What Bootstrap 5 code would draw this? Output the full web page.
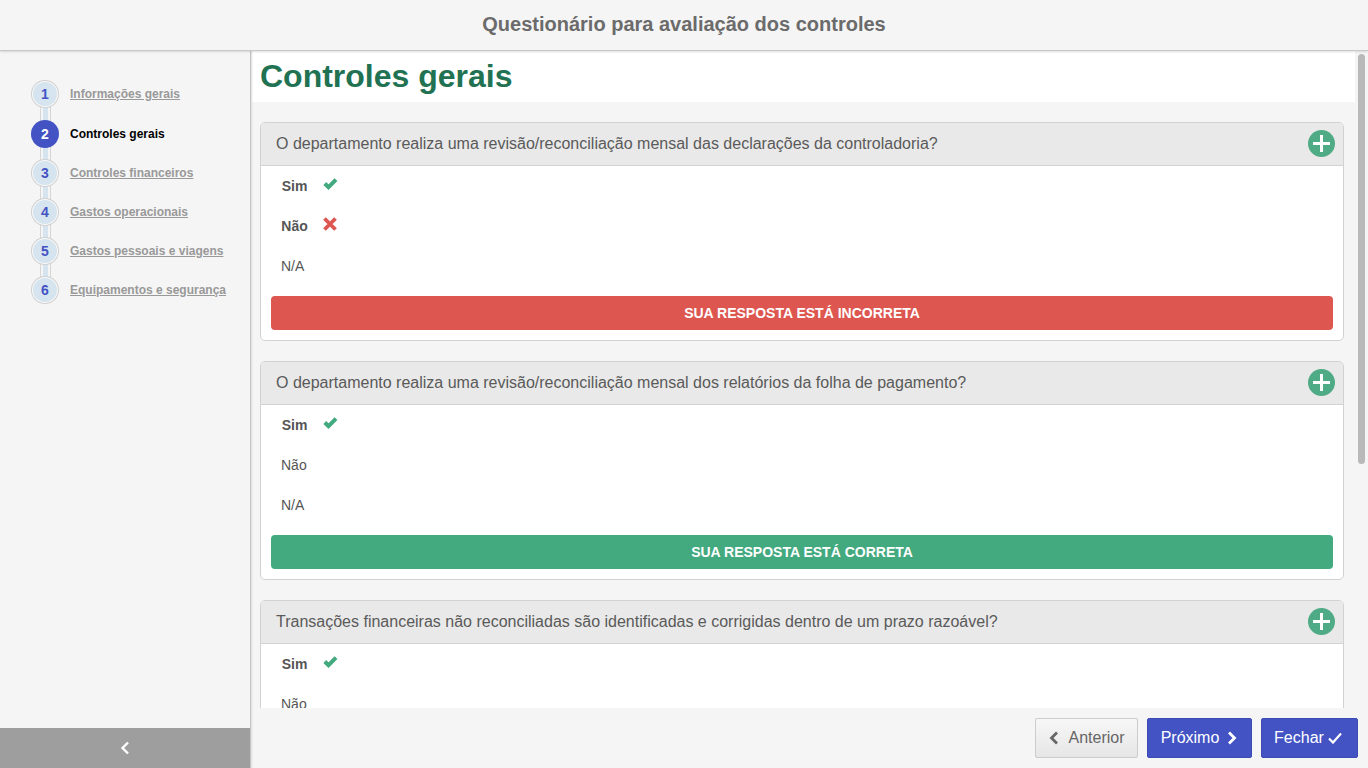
<!DOCTYPE html>
<html lang="pt"><head><meta charset="utf-8"><title>Questionário</title>
<link href="https://cdn.jsdelivr.net/npm/bootstrap@5.3.0/dist/css/bootstrap.min.css" rel="stylesheet">
<style>
html,body{height:100%;overflow:hidden}
body{font-family:"Liberation Sans",Arial,sans-serif;background:#f5f5f5;color:#555;width:1368px;height:768px}
.qa-top{height:51px;padding-bottom:2px;background:#f5f5f5;border-bottom:1px solid #c8c8c8;box-shadow:0 1px 2px rgba(0,0,0,.12);font-size:20px;font-weight:700;color:#6b6b6b;position:relative;z-index:2}
.qa-shell{height:717px}
.qa-side{width:251px;flex:none;border-right:1px solid #c4c4c4;box-shadow:1px 0 2px rgba(0,0,0,.1);background:#f5f5f5;position:relative;z-index:1}
.qa-steps{padding:30px 0 0 31px;list-style:none;margin:0;position:relative}
.qa-step{height:39px;font-size:12px;font-weight:700;color:#999;position:relative}
.qa-step:first-child{height:40px}
.qa-step a{color:#999;margin-left:13px}
.qa-step.on a{color:#000;text-decoration:none}
.qa-dot{width:24px;height:24px;margin:1px 0 0 2px;border-radius:50%;background:#d5e4ee;box-shadow:0 0 0 1px #f9f9f9,0 0 0 2px #d0d0d0;color:#4353c4;font-size:14px;position:relative;z-index:1;flex:none}
.qa-step:not(:last-child)::before{content:"";position:absolute;left:9px;top:20px;width:11px;height:30px;padding:0 2px;background:#d5e4ee content-box;border:solid #d6d6d6;border-width:0 1px}
.qa-step.on .qa-dot{width:28px;height:28px;margin:-1px 0 0 0;background:#4353c4;color:#fff;box-shadow:none}
.qa-step.on a{margin-left:11px}
.qa-toggle{height:40px;background:#9e9e9e}
.qa-main{width:1117px;min-width:0}
.qa-body{height:657px}
.qa-scroll{flex:1;overflow:hidden;min-width:0}
.qa-title{height:51px;background:#fff;margin-left:1px;padding:7px 0 0 8px;font-size:32px;line-height:37px;font-weight:700;color:#217253;margin-bottom:20px}
.qa-card{margin:0 11px 20px 9px;width:1084px;border:1px solid #d2d2d2;border-radius:5px;background:#fff;overflow:hidden}
.qa-head{height:43px;background:#e9e9e9;border-bottom:1px solid #d2d2d2;padding:0 8px 0 15px;font-size:16px;color:#5a5a5a}
.qa-plus{width:27px;height:27px;margin-top:-1px}
.qa-opt{height:40px;padding-left:20px;font-size:14px;color:#555}
.qa-opt b{width:27px;text-align:center;margin-right:15px;display:block;flex:none}
.qa-opt span{width:27px;margin-right:15px;display:block;flex:none}
.qa-res{height:34px;margin:10px;border-radius:4px;font-size:14px;font-weight:700;color:#fff;background:#43a97f;padding-top:1px}
.qa-res.bad{background:#dd5650}
.qa-track{width:13px;background:#f5f5f5;padding:3px 3px 0 3px;flex:none}
.qa-thumb{width:7px;height:410px;background:#b9b9b9;border-radius:4px}
.qa-foot{height:60px;background:#f5f5f5;padding-right:10px;gap:9px}
.qa-btn{height:40px;font-size:16px;border-radius:2px;padding:0;color:#fff;background:#4353c4;border:1px solid #3d4cb5}
.qa-btn:hover{background:#4353c4;color:#fff}
.qa-prev{width:103px;background:linear-gradient(#f7f7f7,#e6e6e6);border-color:#ccc;color:#666;padding-left:1px;gap:5px}
.qa-prev:hover{color:#666}
.qa-next{width:105px;padding-right:1px;gap:4px}
.qa-close{width:97px;gap:4px;padding-right:3px}
</style></head><body>
<header class="qa-top d-flex align-items-center justify-content-center">Questionário para avaliação dos controles</header>
<div class="qa-shell d-flex">
 <aside class="qa-side d-flex flex-column">
  <ul class="qa-steps flex-grow-1">
   <li class="qa-step d-flex"><div class="qa-dot d-flex align-items-center justify-content-center">1</div><a href="#" class="pt-1">Informações gerais</a></li>
   <li class="qa-step on d-flex"><div class="qa-dot d-flex align-items-center justify-content-center">2</div><a href="#" class="pt-1">Controles gerais</a></li>
   <li class="qa-step d-flex"><div class="qa-dot d-flex align-items-center justify-content-center">3</div><a href="#" class="pt-1">Controles financeiros</a></li>
   <li class="qa-step d-flex"><div class="qa-dot d-flex align-items-center justify-content-center">4</div><a href="#" class="pt-1">Gastos operacionais</a></li>
   <li class="qa-step d-flex"><div class="qa-dot d-flex align-items-center justify-content-center">5</div><a href="#" class="pt-1">Gastos pessoais e viagens</a></li>
   <li class="qa-step d-flex"><div class="qa-dot d-flex align-items-center justify-content-center">6</div><a href="#" class="pt-1">Equipamentos e segurança</a></li>
  </ul>
  <div class="qa-toggle d-flex align-items-center justify-content-center"><svg width="10" height="14" viewBox="0 0 10 14"><path d="M8 1.5 2.5 7 8 12.5" fill="none" stroke="#fff" stroke-width="2.4"/></svg></div>
 </aside>
 <main class="qa-main d-flex flex-column">
  <div class="qa-body d-flex overflow-hidden">
   <div class="qa-scroll">
    <h1 class="qa-title">Controles gerais</h1>
    <section class="qa-card">
     <div class="qa-head d-flex align-items-center justify-content-between">O departamento realiza uma revisão/reconciliação mensal das declarações da controladoria?<svg class="qa-plus" viewBox="0 0 27 27"><circle cx="13.5" cy="13.5" r="13.5" fill="#4fab85"/><path d="M13.5 5v17M5 13.5h17" stroke="#fff" stroke-width="3"/></svg></div>
     <div class="qa-opt d-flex align-items-center"><b>Sim</b><svg width="15" height="12" viewBox="0 0 15 12" class="mb-1"><path d="M1.8 5.5 5.5 9.2 13 1.7" fill="none" stroke="#43a97f" stroke-width="4"/></svg></div>
     <div class="qa-opt d-flex align-items-center"><b>Não</b><svg width="14" height="14" viewBox="0 0 14 14" class="mb-1"><path d="M1.5 1.5 12.5 12.5M12.5 1.5 1.5 12.5" fill="none" stroke="#dd5650" stroke-width="3.8"/></svg></div>
     <div class="qa-opt d-flex align-items-center"><span>N/A</span></div>
     <div class="qa-res bad d-flex align-items-center justify-content-center">SUA RESPOSTA ESTÁ INCORRETA</div>
    </section>
    <section class="qa-card">
     <div class="qa-head d-flex align-items-center justify-content-between">O departamento realiza uma revisão/reconciliação mensal dos relatórios da folha de pagamento?<svg class="qa-plus" viewBox="0 0 27 27"><circle cx="13.5" cy="13.5" r="13.5" fill="#4fab85"/><path d="M13.5 5v17M5 13.5h17" stroke="#fff" stroke-width="3"/></svg></div>
     <div class="qa-opt d-flex align-items-center"><b>Sim</b><svg width="15" height="12" viewBox="0 0 15 12" class="mb-1"><path d="M1.8 5.5 5.5 9.2 13 1.7" fill="none" stroke="#43a97f" stroke-width="4"/></svg></div>
     <div class="qa-opt d-flex align-items-center"><span>Não</span></div>
     <div class="qa-opt d-flex align-items-center"><span>N/A</span></div>
     <div class="qa-res d-flex align-items-center justify-content-center">SUA RESPOSTA ESTÁ CORRETA</div>
    </section>
    <section class="qa-card">
     <div class="qa-head d-flex align-items-center justify-content-between">Transações financeiras não reconciliadas são identificadas e corrigidas dentro de um prazo razoável?<svg class="qa-plus" viewBox="0 0 27 27"><circle cx="13.5" cy="13.5" r="13.5" fill="#4fab85"/><path d="M13.5 5v17M5 13.5h17" stroke="#fff" stroke-width="3"/></svg></div>
     <div class="qa-opt d-flex align-items-center"><b>Sim</b><svg width="15" height="12" viewBox="0 0 15 12" class="mb-1"><path d="M1.8 5.5 5.5 9.2 13 1.7" fill="none" stroke="#43a97f" stroke-width="4"/></svg></div>
     <div class="qa-opt d-flex align-items-center"><span>Não</span></div>
     <div class="qa-opt d-flex align-items-center"><span>N/A</span></div>
    </section>
   </div>
   <div class="qa-track"><div class="qa-thumb"></div></div>
  </div>
  <footer class="qa-foot d-flex align-items-center justify-content-end">
   <button class="btn qa-btn qa-prev d-flex align-items-center justify-content-center" type="button"><svg width="10" height="14" viewBox="0 0 10 14" class="me-1"><path d="M8 1.5 2.5 7 8 12.5" fill="none" stroke="#666" stroke-width="2.8"/></svg>Anterior</button>
   <button class="btn qa-btn qa-next d-flex align-items-center justify-content-center" type="button">Próximo<svg width="10" height="14" viewBox="0 0 10 14" class="ms-1"><path d="M2 1.5 7.5 7 2 12.5" fill="none" stroke="#fff" stroke-width="2.8"/></svg></button>
   <button class="btn qa-btn qa-close d-flex align-items-center justify-content-center" type="button">Fechar<svg width="14" height="12" viewBox="0 0 14 12"><path d="M1 6.5 5 10.5 13 1.5" fill="none" stroke="#fff" stroke-width="2.2"/></svg></button>
  </footer>
 </main>
</div>
<script src="https://cdn.jsdelivr.net/npm/bootstrap@5.3.0/dist/js/bootstrap.bundle.min.js"></script>
</body></html>
